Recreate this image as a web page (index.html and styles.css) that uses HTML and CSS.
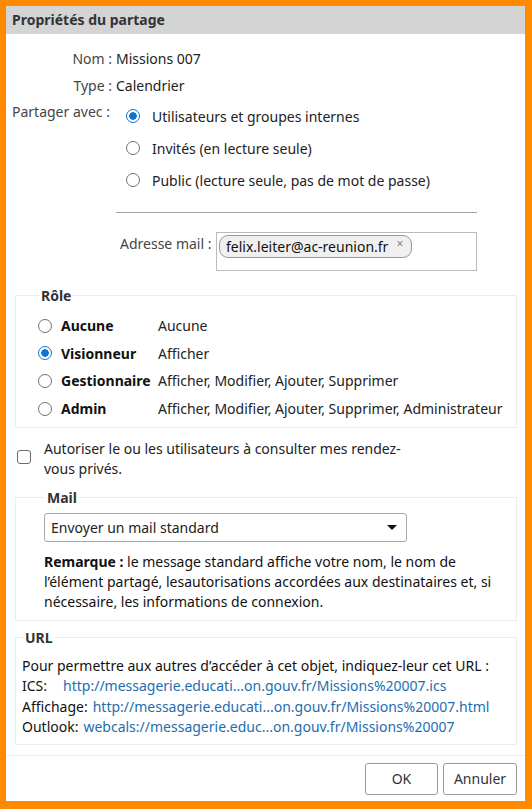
FILE: index.html
```html
<!DOCTYPE html>
<html lang="fr">
<head>
    <meta charset="UTF-8">
    <meta name="viewport" content="width=device-width, initial-scale=1.0">
    <title>Propriétés du partage</title>
    <link rel="stylesheet" href="styles.css">
</head>
<body>
    <div class="dialog">
        <div class="dialog-title">Propriétés du partage</div>

        <div class="dialog-body">
            <div class="info-row">
                <span class="info-label">Nom :</span>
                <span>Missions 007</span>
            </div>
            <div class="info-row">
                <span class="info-label">Type :</span>
                <span>Calendrier</span>
            </div>

            <div class="share-with">
                <span class="share-label">Partager avec :</span>
                <div class="share-options">
                    <label class="option"><input type="radio" name="share" checked> Utilisateurs et groupes internes</label>
                    <label class="option"><input type="radio" name="share"> Invités (en lecture seule)</label>
                    <label class="option"><input type="radio" name="share"> Public (lecture seule, pas de mot de passe)</label>
                </div>
            </div>

            <hr class="separator">

            <div class="mail-row">
                <span class="mail-label">Adresse mail :</span>
                <div class="recipients">
                    <span class="chip">felix.leiter@ac-reunion.fr <span class="chip-close">×</span></span>
                </div>
            </div>

            <fieldset class="group role-group">
                <legend>Rôle</legend>
                <label class="role"><input type="radio" name="role"><b>Aucune</b><span>Aucune</span></label>
                <label class="role"><input type="radio" name="role" checked><b>Visionneur</b><span>Afficher</span></label>
                <label class="role"><input type="radio" name="role"><b>Gestionnaire</b><span>Afficher, Modifier, Ajouter, Supprimer</span></label>
                <label class="role"><input type="radio" name="role"><b>Admin</b><span>Afficher, Modifier, Ajouter, Supprimer, Administrateur</span></label>
            </fieldset>

            <label class="private">
                <input type="checkbox">
                <span>Autoriser le ou les utilisateurs à consulter mes rendez-vous privés.</span>
            </label>

            <fieldset class="group mail-group">
                <legend>Mail</legend>
                <div class="select">
                    <span>Envoyer un mail standard</span>
                    <span class="select-arrow"></span>
                </div>
                <p class="note"><b>Remarque :</b> le message standard affiche votre nom, le nom de l’élément partagé, lesautorisations accordées aux destinataires et, si nécessaire, les informations de connexion.</p>
            </fieldset>

            <fieldset class="group url-group">
                <legend>URL</legend>
                <p class="url-intro">Pour permettre aux autres d’accéder à cet objet, indiquez-leur cet URL :</p>
                <div class="url-row"><span class="url-label ics">ICS:</span><a href="#">http://messagerie.educati...on.gouv.fr/Missions%20007.ics</a></div>
                <div class="url-row"><span class="url-label">Affichage:</span><a href="#">http://messagerie.educati...on.gouv.fr/Missions%20007.html</a></div>
                <div class="url-row"><span class="url-label">Outlook:</span><a href="#">webcals://messagerie.educ...on.gouv.fr/Missions%20007</a></div>
            </fieldset>
        </div>

        <div class="dialog-footer">
            <button class="btn ok">OK</button>
            <button class="btn">Annuler</button>
        </div>
    </div>
</body>
</html>
```

FILE: styles.css
```css
body, html {
    margin: 0;
    padding: 0;
    height: 100%;
}
body {
    background: #ff8a00;
    font-family: 'Noto Sans', sans-serif;
    font-size: 14px;
    color: #222;
    overflow: hidden;
}
.dialog {
    margin: 6px 7px 0 6px;
    height: 795px;
    background: #fff;
    display: flex;
    flex-direction: column;
}
.dialog-title {
    height: 28px;
    line-height: 27px;
    padding-left: 6px;
    background: #d4d4d4;
    font-weight: bold;
    font-size: 14px;
    color: #333;
}
.dialog-body {
    flex: 1;
    padding: 11px 8px 0 9px;
}

/* name / type */
.info-row {
    display: flex;
    height: 27px;
    align-items: center;
    gap: 4px;
}
.info-label {
    width: 97px;
    text-align: right;
    color: #444;
}

/* share with */
.share-with {
    display: flex;
    margin-top: 1px;
}
.share-label {
    width: 114px;
    margin-left: -3px;
    padding-top: 2px;
    color: #444;
}
.share-options {
    display: flex;
    flex-direction: column;
}
.option {
    display: flex;
    align-items: center;
    height: 32px;
    gap: 12px;
}

input[type=radio] {
    appearance: none;
    width: 14px;
    height: 14px;
    margin: 0;
    border: 1px solid #6e6e6e;
    border-radius: 50%;
    background: #fff;
    flex: none;
}
input[type=radio]:checked {
    border-color: #0b74d4;
    background: radial-gradient(circle, #0b74d4 0 3.5px, #fff 4px);
}

.separator {
    margin: 16px 40px 0 101px;
    border: none;
    border-top: 1px solid #a0a0a0;
}

/* recipients */
.mail-row {
    display: flex;
    align-items: flex-start;
    margin-top: 19px;
    padding-left: 105px;
}
.mail-label {
    width: 96px;
    padding-top: 2px;
    color: #444;
    white-space: nowrap;
}
.recipients {
    width: 255px;
    height: 33px;
    border: 1px solid #bbb;
    padding: 2px;
}
.chip {
    display: inline-flex;
    align-items: center;
    height: 21px;
    padding: 0 8px 0 6px;
    border: 1px solid #999;
    border-radius: 9px;
    background: #f0f0f0;
    color: #111;
    font-size: 14px;
}
.chip-close {
    color: #888;
    font-size: 12px;
    margin-left: 8px;
    margin-top: -6px;
}

/* fieldsets */
.group {
    margin: 0;
    border: 1px solid #ececec;
    padding: 0 6px 6px 6px;
}
.group legend {
    padding: 0 2px;
    margin-left: 1px;
    font-weight: bold;
    color: #333;
    font-size: 14px;
}
.role-group {
    margin-top: 15px;
    padding: 7px 0 5px 22px;
}
.role {
    display: flex;
    align-items: center;
    height: 27.6px;
}
.role b {
    width: 97px;
    margin-left: 9px;
    color: #111;
    white-space: nowrap;
}
.role span {
    color: #222;
    white-space: nowrap;
}

.private {
    display: flex;
    align-items: flex-start;
    gap: 13px;
    margin: 11px 0 0 2px;
    line-height: 20px;
}
.private span {
    width: 362px;
}
input[type=checkbox] {
    appearance: none;
    width: 14px;
    height: 14px;
    margin: 11px 0 0 0;
    border: 1px solid #6e6e6e;
    border-radius: 3px;
    flex: none;
}

.mail-group {
    margin-top: 9px;
    padding: 6px 8px 8px 28px;
}
.select {
    width: 346px;
    height: 27px;
    border: 1px solid #a8a8a8;
    border-radius: 3px;
    display: flex;
    align-items: center;
    justify-content: space-between;
    padding: 0 9px 0 6px;
    color: #222;
}
.select-arrow {
    width: 0;
    height: 0;
    border-left: 5px solid transparent;
    border-right: 5px solid transparent;
    border-top: 5px solid #111;
}
.note {
    margin: 10px 0 0 0;
    line-height: 20px;
    color: #111;
}

.url-group {
    margin-top: 7px;
    padding: 9px 6px 6px 6px;
}
.url-intro {
    margin: 0;
    line-height: 20px;
    color: #111;
}
.url-row {
    line-height: 20.5px;
    color: #111;
    white-space: nowrap;
}
.url-label {
    margin-right: 5px;
}
.url-label.ics {
    margin-right: 16px;
}
.url-row a {
    color: #1d6db0;
    text-decoration: none;
}

/* footer */
.dialog-footer {
    border-top: 1px solid #eee;
    height: 45px;
    display: flex;
    justify-content: flex-end;
    align-items: center;
    gap: 5px;
    padding-right: 8px;
}
.btn {
    height: 32px;
    width: 74px;
    border: 1px solid #9a9a9a;
    border-radius: 3px;
    background: #fff;
    font-family: inherit;
    font-size: 14px;
    color: #333;
}
.btn.ok {
    width: 73px;
}
```
